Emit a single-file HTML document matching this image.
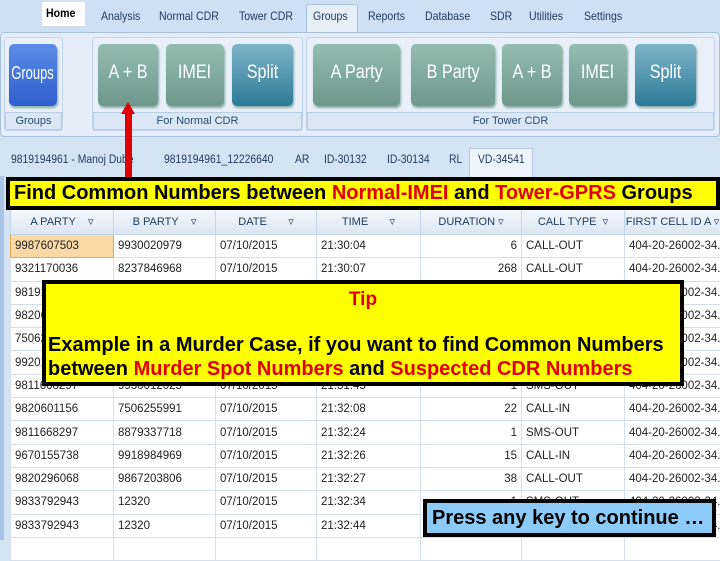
<!DOCTYPE html><html><head><style>
*{margin:0;padding:0;box-sizing:border-box}
body{width:720px;height:540px;overflow:hidden;background:#d5e4f5;font-family:"Liberation Sans",sans-serif;position:relative}
.a{position:absolute}
.menu span{position:absolute;top:9px;font-size:12px;color:#1e395b;transform:scaleX(.88);transform-origin:left}
.btn{position:absolute;top:44px;height:62px;border-radius:5px;color:#fff;font-size:19px;text-align:center;line-height:58px;box-shadow:1px 2px 2px #8aa;background:linear-gradient(#94bdb0,#6d988b);overflow:hidden;white-space:nowrap}
.btn span{display:inline-block;transform:scaleX(.85)}
.lbl{position:absolute;top:112px;height:18px;background:#dbe7f5;border:1px solid #b9cde5;font-size:11px;color:#2a4a70;text-align:center;line-height:16px}
.dt{position:absolute;top:154px;font-size:11.5px;color:#1e395b;transform:scaleX(.9);transform-origin:left}
table{position:absolute;left:10px;top:208px;border-collapse:collapse;table-layout:fixed;width:710px;background:#fff;font-size:11.5px;color:#222}
td{height:23.3px;border:1px solid #d4dfec;padding:0 4px;white-space:nowrap;overflow:hidden}
th{height:26px;background:linear-gradient(#f4f8fc,#dbe6f3);border:1px solid #c5d5e8;font-weight:normal;font-size:11px;color:#1e395b;white-space:nowrap;overflow:hidden}
.r{text-align:right}
.red{color:#e00000}
.big{font-weight:bold;font-size:20px;white-space:nowrap}
</style></head><body>
<div class="a" style="left:0;top:0;width:720px;height:32px;background:#cfe0f4"></div>
<div class="a" style="left:42px;top:2px;width:43px;height:24px;background:#fff"></div>
<div class="a" style="left:306px;top:4px;width:52px;height:30px;background:#e6eef8;border:1px solid #a9c0de;border-bottom:none;border-radius:3px 3px 0 0"></div>
<div class="menu">
<span style="left:46px;top:6px;font-weight:bold;color:#000">Home</span>
<span style="left:101px">Analysis</span><span style="left:159px">Normal CDR</span><span style="left:239px">Tower CDR</span>
<span style="left:313px">Groups</span><span style="left:368px">Reports</span><span style="left:425px">Database</span><span style="left:490px">SDR</span><span style="left:529px">Utilities</span><span style="left:584px">Settings</span></div>
<div class="a" style="left:0;top:32px;width:720px;height:105px;background:#e4edf8;border:1px solid #a9c0de;border-radius:4px"></div>
<div class="a" style="left:4px;top:37px;width:59px;height:94px;border:1px solid #c2d4ea;border-radius:3px;background:#e9f0f9"></div>
<div class="a" style="left:92px;top:37px;width:211px;height:94px;border:1px solid #c2d4ea;border-radius:3px;background:#e9f0f9"></div>
<div class="a" style="left:306px;top:37px;width:409px;height:94px;border:1px solid #c2d4ea;border-radius:3px;background:#e9f0f9"></div>
<div class="btn" style="left:9px;width:48px;font-size:18px;background:linear-gradient(#5b8ce6,#2e5fcf)"><span style="transform:scaleX(.72);margin:0 -10px">Groups</span></div>
<div class="btn" style="left:98px;width:60px"><span>A + B</span></div>
<div class="btn" style="left:166px;width:58px"><span>IMEI</span></div>
<div class="btn" style="left:232px;width:61px;background:linear-gradient(#7fb4c8,#2b7a98)"><span>Split</span></div>
<div class="btn" style="left:313px;width:87px"><span>A Party</span></div>
<div class="btn" style="left:411px;width:84px"><span>B Party</span></div>
<div class="btn" style="left:502px;width:60px"><span>A + B</span></div>
<div class="btn" style="left:569px;width:58px"><span>IMEI</span></div>
<div class="btn" style="left:635px;width:61px;background:linear-gradient(#7fb4c8,#2b7a98)"><span>Split</span></div>
<div class="lbl" style="left:5px;width:57px">Groups</div>
<div class="lbl" style="left:93px;width:209px">For Normal CDR</div>
<div class="lbl" style="left:307px;width:407px">For Tower CDR</div>
<div class="a" style="left:469px;top:148px;width:64px;height:32px;background:#eef4fb;border:1px solid #b5c9e2"></div>
<span class="dt" style="left:11px">9819194961 - Manoj Dube</span><span class="dt" style="left:164px">9819194961_12226640</span><span class="dt" style="left:295px">AR</span><span class="dt" style="left:324px">ID-30132</span><span class="dt" style="left:387px">ID-30134</span><span class="dt" style="left:449px">RL</span><span class="dt" style="left:478px">VD-34541</span>
<div class="a" style="left:0;top:176px;width:4px;height:364px;background:#a8c4e6"></div>
<table>
<colgroup><col style="width:103px"><col style="width:102px"><col style="width:101px"><col style="width:104px"><col style="width:101px"><col style="width:103px"><col style="width:96px"></colgroup>
<tr><th>A PARTY&nbsp;&nbsp;&nbsp;&nbsp;▿</th><th>B PARTY&nbsp;&nbsp;&nbsp;&nbsp;▿</th><th>DATE&nbsp;&nbsp;&nbsp;&nbsp;&nbsp;&nbsp;&nbsp;▿</th><th>TIME&nbsp;&nbsp;&nbsp;&nbsp;&nbsp;&nbsp;&nbsp;▿</th><th>DURATION ▿</th><th>CALL TYPE &nbsp;▿</th><th>FIRST CELL ID A ▿</th></tr>
<tr><td style="background:#fbd9a6;border-color:#e9a850">9987607503</td><td>9930020979</td><td>07/10/2015</td><td>21:30:04</td><td class="r">6</td><td>CALL-OUT</td><td>404-20-26002-34..</td></tr>
<tr><td>9321170036</td><td>8237846968</td><td>07/10/2015</td><td>21:30:07</td><td class="r">268</td><td>CALL-OUT</td><td>404-20-26002-34..</td></tr>
<tr><td>9819194961</td><td>9930020979</td><td>07/10/2015</td><td>21:30:12</td><td class="r">1</td><td>SMS-OUT</td><td>404-20-26002-34..</td></tr>
<tr><td>9820601156</td><td>7506255991</td><td>07/10/2015</td><td>21:30:40</td><td class="r">2</td><td>CALL-IN</td><td>404-20-26002-34..</td></tr>
<tr><td>7506255991</td><td>9820601156</td><td>07/10/2015</td><td>21:31:02</td><td class="r">3</td><td>CALL-OUT</td><td>404-20-26002-34..</td></tr>
<tr><td>9920112233</td><td>9918984969</td><td>07/10/2015</td><td>21:31:20</td><td class="r">5</td><td>CALL-IN</td><td>404-20-26002-34..</td></tr>
<tr><td>9811668297</td><td>9930012025</td><td>07/10/2015</td><td>21:31:45</td><td class="r">1</td><td>SMS-OUT</td><td>404-20-26002-34..</td></tr>
<tr><td>9820601156</td><td>7506255991</td><td>07/10/2015</td><td>21:32:08</td><td class="r">22</td><td>CALL-IN</td><td>404-20-26002-34..</td></tr>
<tr><td>9811668297</td><td>8879337718</td><td>07/10/2015</td><td>21:32:24</td><td class="r">1</td><td>SMS-OUT</td><td>404-20-26002-34..</td></tr>
<tr><td>9670155738</td><td>9918984969</td><td>07/10/2015</td><td>21:32:26</td><td class="r">15</td><td>CALL-IN</td><td>404-20-26002-34..</td></tr>
<tr><td>9820296068</td><td>9867203806</td><td>07/10/2015</td><td>21:32:27</td><td class="r">38</td><td>CALL-OUT</td><td>404-20-26002-34..</td></tr>
<tr><td>9833792943</td><td>12320</td><td>07/10/2015</td><td>21:32:34</td><td class="r">1</td><td>SMS-OUT</td><td>404-20-26002-34..</td></tr>
<tr><td>9833792943</td><td>12320</td><td>07/10/2015</td><td>21:32:44</td><td class="r">1</td><td>SMS-OUT</td><td>404-20-26002-34..</td></tr>
<tr><td></td><td></td><td></td><td></td><td></td><td></td><td></td></tr>
</table>
<div class="a" style="left:125px;top:112px;width:7px;height:70px;background:#e00000"></div>
<div class="a" style="left:121px;top:102px;width:0;height:0;border-left:7.5px solid transparent;border-right:7.5px solid transparent;border-bottom:12px solid #e00000"></div>
<div class="a big" style="left:6px;top:177px;width:714px;height:33px;background:#ffff00;border:4px solid #000;line-height:25px;padding-left:4px">Find Common Numbers between <span class="red">Normal-IMEI</span> and <span class="red">Tower-GPRS</span> Groups</div>
<div class="a big" style="left:42px;top:280px;width:642px;height:106px;background:#ffff00;border:4px solid #000">
<div style="text-align:center;color:#e00000;margin-top:5px;font-size:19px">Tip</div>
<div style="padding-left:2px;margin-top:22px;line-height:24px">Example in a Murder Case, if you want to find Common Numbers<br>between <span class="red">Murder Spot Numbers</span> and <span class="red">Suspected CDR Numbers</span></div></div>
<div class="a big" style="left:423px;top:499px;width:293px;height:38px;background:#8ccbf7;border:4px solid #000;line-height:30px;padding-left:5px">Press any key to continue …</div>
</body></html>
